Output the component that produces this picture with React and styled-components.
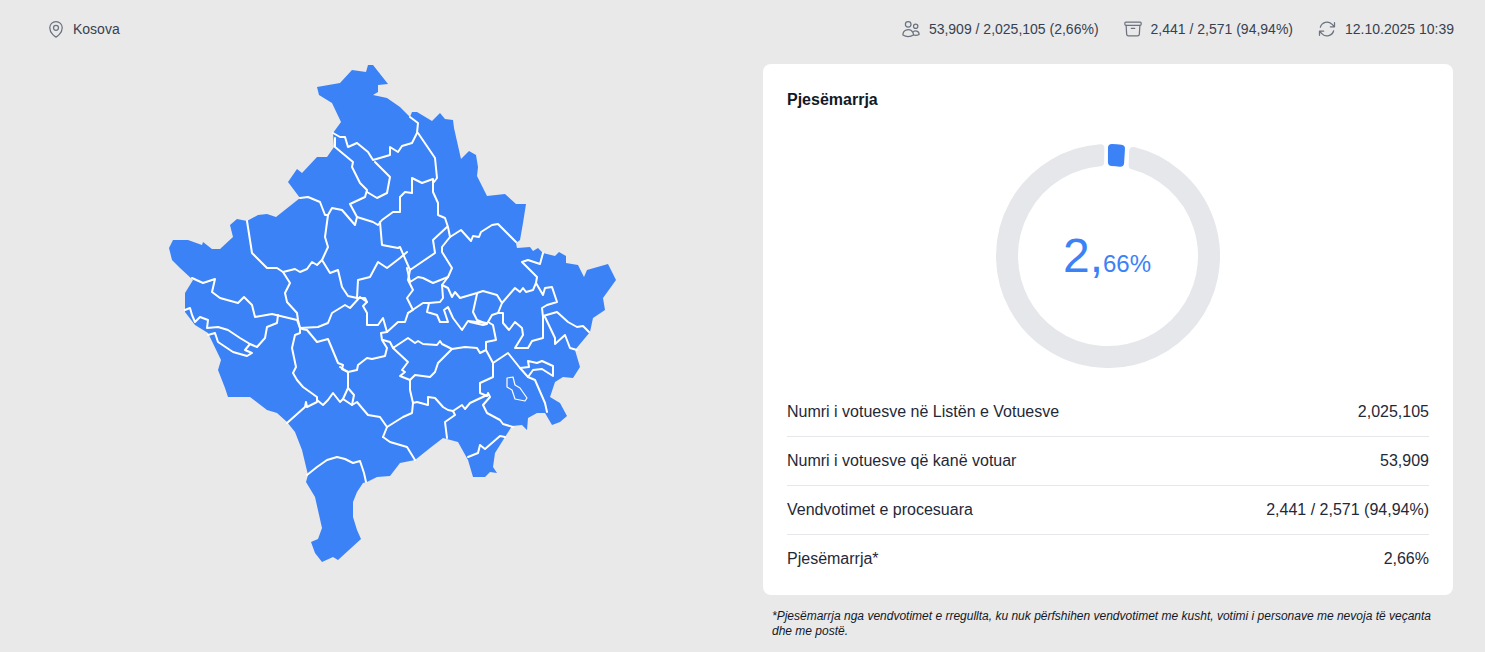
import React from "react";
import styled, { createGlobalStyle } from "styled-components";
import {
  HiOutlineMapPin,
  HiOutlineUsers,
  HiOutlineArchiveBox,
  HiOutlineArrowPath,
} from "react-icons/hi2";

const BLUE = "#3b82f6";

const GlobalStyle = createGlobalStyle`
  html, body {
    margin: 0;
    height: 652px;
    overflow: hidden;
    background: #e9e9e9;
    font-family: "Liberation Sans", Arial, sans-serif;
  }
  * { box-sizing: border-box; }
`;

const OUTLINE =
  "317,87 340,83 352,70 366,72 368,65 373,65 388,84 378,85 378,92 373,95 387,98 400,107 410,117 412,112 417,112 432,121 440,113 445,119 453,120 454,128 461,159 469,151 476,155 478,167 477,176 487,196 505,194 516,204 526,204 523,223 520,240 516,243 517,248 530,247 533,251 538,248 543,253 555,256 559,252 566,256 566,263 578,265 584,277 587,270 608,264 616,280 603,298 605,310 593,318 590,332 575,350 580,367 573,378 563,377 555,382 550,397 560,403 567,416 560,422 552,425 545,413 537,413 528,418 527,430 522,425 512,426 505,437 495,453 493,467 497,473 490,472 485,477 473,477 468,460 458,442 443,438 430,448 415,460 400,463 390,476 377,477 367,482 363,483 357,492 353,502 353,517 357,530 361,539 338,560 333,557 322,562 315,553 311,542 318,539 322,528 315,497 306,482 308,475 302,450 295,432 287,422 277,413 267,410 250,397 228,397 225,388 218,370 221,360 208,333 195,325 185,312 185,293 193,280 180,268 172,260 169,248 173,240 188,240 202,245 203,242 212,249 220,249 233,237 230,225 237,219 247,221 258,215 267,214 276,217 300,198 288,182 297,169 302,173 317,157 327,157 334,147 333,133 341,122 332,103 319,95";

const BORDERS = [
  "333,133 340,137 345,137 348,147 357,143 368,152 373,160 390,155 390,147 398,152 402,146 412,143 417,133 418,123 410,117",
  "335,138 335,147 353,162 352,167 360,183 367,190 365,197 350,204 357,217 355,225 342,210 332,208 328,215 325,215 320,202 308,197 300,198",
  "375,162 390,177 387,193 377,198 367,192",
  "247,221 252,253 267,268 277,268 283,272 295,269 300,272 307,269 312,262 317,265 322,260 328,247 325,237 328,215",
  "283,272 290,283 285,293 287,302 297,313 298,320 300,328",
  "322,260 330,273 338,270 342,287 348,296 357,298 365,298 367,302 363,306 367,313 367,325 378,325 383,318 387,332 381,333 382,340 387,348 385,356 372,359 367,358 358,365 357,370 348,372 340,367",
  "357,298 358,280 370,277 378,262 387,268 400,258 407,252",
  "357,217 373,222 378,225 382,220 393,212 400,212 400,197 405,192 412,193 412,178 422,183 433,179 433,192 438,203 438,215 445,218 448,227 450,237",
  "380,222 382,245 398,248 400,247 410,270 435,253 433,240 447,227",
  "418,133 435,158 437,178 434,182",
  "450,237 461,230 471,241 473,236 479,237 481,232 492,225 498,224 516,242",
  "450,237 442,247 442,252 452,268 448,277 433,283 423,278 418,277 410,282 407,268",
  "410,270 408,280 413,290 407,298 413,310 408,313",
  "387,332 398,322 405,322 408,313 423,303 429,303 440,302 443,298 442,285",
  "448,277 442,285 448,288 452,297 455,292 460,298 477,293 483,291 497,295 502,303 515,288 520,292 523,288 526,292 533,290 536,283 537,277 522,262 528,260 540,264 543,253",
  "536,283 543,295 545,288 552,287 557,302 547,305 542,308 543,317 543,338 532,341 528,348 515,348 523,335 522,328 515,322 509,330 503,323 503,313 498,313 492,315 488,322 493,325 496,340 486,342 486,350 480,353 477,348 465,347 452,349 442,344 440,341 437,345 423,344 418,341 415,343 408,338 393,348 390,342 383,340",
  "477,294 473,312 477,320 487,324 483,325 470,322",
  "502,303 498,313",
  "429,303 427,312 437,315 440,322 448,322 444,310 448,307 453,318 462,330 468,321 477,322 487,323",
  "543,316 557,312 568,322 577,327 583,326 589,332",
  "545,317 555,338 555,344 565,335 570,348 577,350",
  "486,350 493,363 508,353 520,368 528,377 535,380 545,403 547,412",
  "520,368 529,367 528,361 537,363 542,361 553,366 553,376 542,369 533,370 528,377",
  "493,363 493,377 480,383 480,393 487,396 488,393 490,397 483,405 487,413 500,420 503,424 513,427",
  "487,395 470,403 465,409 462,405 453,411 448,410 443,407 435,398 428,397 428,405 417,402 413,403 410,390 410,380",
  "393,348 408,362 402,370 405,372 400,376 410,380 415,375 430,377 435,372 438,363 452,349",
  "413,403 412,413 403,417 387,427",
  "453,411 455,415 445,422 447,438",
  "383,437 390,442 407,447 415,460",
  "468,457 478,453 480,445 485,449 500,436 505,437",
  "192,278 203,283 215,279 212,292 220,298 238,303 244,297 252,305 255,317 272,314 297,320 300,328",
  "278,315 277,323 267,327 265,338 257,347 250,344 240,338 228,330 218,327 207,328 208,320 200,317 195,322 192,315 190,308 185,310",
  "208,335 215,333 218,342 233,352 247,356 252,353 245,350 250,344",
  "300,328 300,333 295,335 292,348 296,367 293,373 297,380 303,387 317,397 317,402 307,407 306,402 305,407 287,423",
  "317,400 323,405 328,400 333,393 340,402 343,399 352,405 357,402 362,408 368,415 380,417 387,427 383,437",
  "343,399 348,388 348,372",
  "348,388 354,395 352,405",
  "300,328 318,327 328,323 332,313 345,305 350,308 360,297 367,302",
  "302,329 307,330 317,342 328,339 338,363 343,365 342,369 348,372",
  "307,475 317,467 327,460 337,457 345,459 353,463 360,461 364,473 366,482",
];

const LAKE =
  "507,378 513,377 515,385 520,388 527,398 525,401 515,399 512,390 507,387";

// annular sector with rounded corners: inset the shape and stroke it with round joins
const CX = 112;
const CY = 112;
const ROUND = 4;
const point = (deg, r) => {
  const rad = (deg * Math.PI) / 180;
  return `${(CX + r * Math.sin(rad)).toFixed(2)} ${(CY - r * Math.cos(rad)).toFixed(2)}`;
};
const sector = (startOut, startIn, endOut, endIn) => {
  const R = 112 - ROUND;
  const r = 90 + ROUND;
  const large = endOut - startOut > 180 ? 1 : 0;
  return `M${point(startOut, R)} A${R} ${R} 0 ${large} 1 ${point(endOut, R)} L${point(endIn, r)} A${r} ${r} 0 ${large} 0 ${point(startIn, r)} Z`;
};

const rows = [
  ["Numri i votuesve në Listën e Votuesve", "2,025,105"],
  ["Numri i votuesve që kanë votuar", "53,909"],
  ["Vendvotimet e procesuara", "2,441 / 2,571 (94,94%)"],
  ["Pjesëmarrja*", "2,66%"],
];

export default function App() {
  return (
    <Page>
      <GlobalStyle />
      <Header>
        <Place>
          <HiOutlineMapPin size={20} />
          <span>Kosova</span>
        </Place>
        <Stats>
          <Stat>
            <HiOutlineUsers size={20} />
            <span>53,909 / 2,025,105 (2,66%)</span>
          </Stat>
          <Stat>
            <HiOutlineArchiveBox size={20} />
            <span>2,441 / 2,571 (94,94%)</span>
          </Stat>
          <Stat>
            <HiOutlineArrowPath size={20} />
            <span>12.10.2025 10:39</span>
          </Stat>
        </Stats>
      </Header>
      <Main>
        <MapSide>
          <svg width="455" height="506" viewBox="165 60 455 506">
            <polygon points={OUTLINE} fill={BLUE} />
            {BORDERS.map((pts) => (
              <polyline
                key={pts}
                points={pts}
                fill="none"
                stroke="#fff"
                strokeWidth="2"
                strokeLinejoin="round"
                strokeLinecap="round"
              />
            ))}
            <polygon points={LAKE} fill="none" stroke="#fff" strokeWidth="1.2" strokeLinejoin="round" />
          </svg>
        </MapSide>
        <Side>
          <Card>
            <Title>Pjesëmarrja</Title>
            <Donut>
              <svg width="224" height="224" viewBox="0 0 224 224">
                <path
                  d={sector(13.5, 15.2, 356, 355.2)}
                  fill="#e5e7eb"
                  stroke="#e5e7eb"
                  strokeWidth={ROUND * 2}
                  strokeLinejoin="round"
                />
                <path
                  d={sector(2.1, 2.4, 6.9, 7.4)}
                  fill={BLUE}
                  stroke={BLUE}
                  strokeWidth={ROUND * 2}
                  strokeLinejoin="round"
                />
              </svg>
              <Percent>
                2,<small>66%</small>
              </Percent>
            </Donut>
            <Rows>
              {rows.map(([label, value]) => (
                <Row key={label}>
                  <span>{label}</span>
                  <span>{value}</span>
                </Row>
              ))}
            </Rows>
          </Card>
          <Note>
            *Pjesëmarrja nga vendvotimet e rregullta, ku nuk përfshihen
            vendvotimet me kusht, votimi i personave me nevoja të veçanta dhe me
            postë.
          </Note>
        </Side>
      </Main>
    </Page>
  );
}

const Page = styled.div`
  height: 652px;
  overflow: hidden;
`;

const Header = styled.header`
  height: 64px;
  padding: 0 31px 6px 46px;
  display: flex;
  align-items: center;
  justify-content: space-between;
`;

const Stats = styled.div`
  display: flex;
  gap: 24px;
`;

const Stat = styled.div`
  display: flex;
  align-items: center;
  gap: 8px;
  font-size: 14px;
  line-height: 20px;
  color: #374151;
  svg {
    color: #6b7280;
  }
`;

const Place = styled(Stat)`
  gap: 7px;
`;

const Main = styled.main`
  display: grid;
  grid-template-columns: 1fr 690px;
  padding-right: 32px;
`;

const MapSide = styled.div`
  padding-left: 165px;
  margin-top: -4px;
`;

const Side = styled.div`
  display: flex;
  flex-direction: column;
`;

const Card = styled.section`
  background: #fff;
  border-radius: 8px;
  padding: 24px 24px 12px;
  height: 531px;
`;

const Title = styled.h2`
  margin: 0;
  font-size: 16px;
  line-height: 24px;
  font-weight: 700;
  color: #111827;
`;

const Donut = styled.div`
  position: relative;
  width: 224px;
  height: 224px;
  margin: 32px auto 20px;
  svg {
    display: block;
  }
`;

const Percent = styled.div`
  position: absolute;
  inset: 0;
  display: flex;
  align-items: baseline;
  justify-content: center;
  padding: 84px 2px 0 0;
  font-size: 48px;
  line-height: 56px;
  color: ${BLUE};
  small {
    font-size: 24px;
  }
`;

const Rows = styled.div`
  display: flex;
  flex-direction: column;
`;

const Row = styled.div`
  display: flex;
  justify-content: space-between;
  padding: 12px 0;
  font-size: 16px;
  line-height: 24px;
  color: #1f2937;
  border-bottom: 1px solid #e5e7eb;
  &:last-child {
    border-bottom: 0;
  }
`;

const Note = styled.p`
  margin: 14px 0 0;
  padding: 0 9px;
  font-size: 12px;
  line-height: 15px;
  font-style: italic;
  color: #111827;
`;
